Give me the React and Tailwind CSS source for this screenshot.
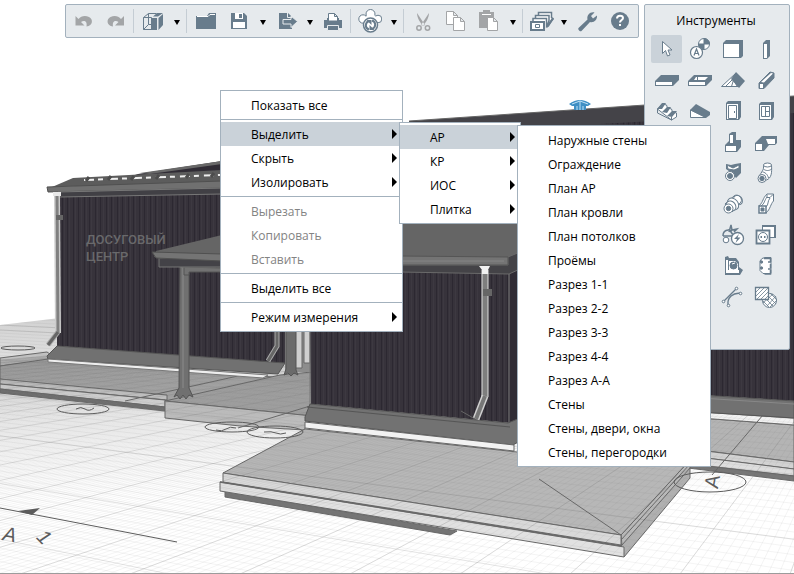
import React from "react";

const C = "#687c8c";
const W = "#ffffff";
const G = "#a3a5a7";

const Icon = ({ children }) => (
  <svg viewBox="0 0 24 24" className="w-6 h-6 shrink-0" fill="none" stroke={C} aria-hidden="true">
    {children}
  </svg>
);

const icons = {
  undo: <path d="M4.500 7v9.500h9L10 13c3-2 6.500-1 5.500 4.500c6.500-.5 7-7.500 2.500-9.500c-4-2-8-1-10.500 2z" fill={G} stroke="none" />,
  redo: <path d="M20 7v9.500h-9l3.500-3.500c-3-2-6.500-1-5.500 4.500c-6.500-.5-7-7.500-2.500-9.500c4-2 8-1 10.500 2z" fill={G} stroke="none" />,
  cube: (
    <>
      <path d="M2.500 8.500h8v12h-8zM2.500 8.500l5-4h8M7.500 4.500v11h3M2.500 20.500l5-5" fill="none" />
      <path d="M10 9h6v12h-6zM12 7.500l4-3.500h6l-5 3.500zM17.500 9l4.500-4v11l-4.500 5z" fill={C} stroke="none" />
    </>
  ),
  folder: (
    <>
      <path d="M2 7h11l2-3h7v16H2z" fill={C} stroke="none" />
      <path d="M3 7.500h11l2-2h5" stroke={W} />
    </>
  ),
  save: (
    <>
      <path d="M4 4h13l3 3v13H4z" fill={C} stroke="none" />
      <path d="M8 4h8v6H8zM6 13h12v6H6z" fill={W} stroke="none" />
      <path d="M12 5h3v4h-3z" fill={C} stroke="none" />
    </>
  ),
  exportFile: (
    <>
      <path d="M3 4h9l4 4v12H3z" fill={C} stroke="none" />
      <path d="M11.500 4v4.500H16M7 10.500h8V7l6.500 5.500-6.500 6v-3.500H7z" fill={C} stroke="#e6eaed" />
    </>
  ),
  print: (
    <>
      <path d="M3 11h3V9h12v2h3v8H3z" fill={C} stroke="none" />
      <path d="M7.500 12V4.500h6l3 3V12zM13.500 4.500v3h3" fill={W} />
      <path d="M6.500 16.500h11v5h-11z" fill={C} stroke="#e6eaed" />
    </>
  ),
  sync: (
    <>
      <circle cx="5" cy="10" r="4.200" fill={W} />
      <circle cx="20" cy="10" r="3.800" fill={W} />
      <circle cx="12.500" cy="5" r="4.500" fill={W} />
      <path d="M5 10l5-4h6l4 4-4 6H8z" fill={W} stroke="none" />
      <circle cx="12.500" cy="16" r="7" fill={W} strokeWidth="1.500" />
      <path d="M11 20.500c-4.500-1.500-4-7 0-8.500M14 11.500c4.500 1.500 4 7 0 8.500" strokeWidth="2" />
      <path d="M8.500 11h5v5zM16.500 21h-5v-5z" fill={C} stroke="none" />
    </>
  ),
  cut: (
    <>
      <path d="M6 4l8 12-2 1C9 13 6 9 6 4zM18 4l-8 12 2 1c3-4 6-8 6-13z" fill={G} stroke="none" />
      <circle cx="8" cy="19" r="2.200" stroke={G} strokeWidth="1.500" />
      <circle cx="16.500" cy="19" r="2.200" stroke={G} strokeWidth="1.500" />
    </>
  ),
  copy: (
    <g fill={W} stroke={G}>
      <path d="M2.500 2.500h7l4 4v9h-11zM9.500 2.500v4h4" />
      <path d="M9.500 8.500h7l4 4v9h-11zM16.500 8.500v4h4" />
    </g>
  ),
  paste: (
    <>
      <path d="M2 3h4V1h7v2h4v16H2z" fill={G} stroke="none" />
      <path d="M5 5.500h9" stroke={W} />
      <path d="M10.500 8.500h6l4 4v9h-10zM16.500 8.500v4h4" fill={W} stroke={G} />
    </>
  ),
  layers: (
    <>
      <path d="M8.500 7V3.500h13v5l1.500 1-5 8" fill={W} strokeWidth="1.500" />
      <path d="M5.500 9V6.500h13.500v5l-2 5" fill={W} strokeWidth="1.500" />
      <path d="M3 12V9.500h13.500v9" fill={W} strokeWidth="1.500" />
      <path d="M1 13h13v8H1z" fill={W} strokeWidth="2" />
      <path d="M5.500 15.500h4v3h-4z" />
      <path d="M16 17l6-8 2 1-7 9z" fill={C} stroke="none" />
    </>
  ),
  wrench: <path d="M3.500 19l9-8.500c-1-4 2.500-8 7-7l-3.500 3.500 2 2.500 4-3c.5 4-3 7.500-7 6.500L6.500 22c-1.500 1-4-1.500-3-3z" fill={C} stroke="none" />,
  help: (
    <>
      <circle cx="12" cy="12" r="9" fill={C} stroke="none" />
      <path d="M9 9.500c0-4 6-3.500 6-.5 0 2-3 2-3 4.500" stroke={W} strokeWidth="2" />
      <path d="M11 15h2v2h-2z" fill={W} stroke="none" />
    </>
  ),
  pointer: <path d="M7.500 4.500v12l3-3 2 5.500 2.500-1-2-5h4z" fill={W} />,
  axis: (
    <>
      <circle cx="16" cy="7" r="5.500" fill={W} />
      <path d="M16 1.500V7h5.500A5.500 5.500 0 0 0 16 1.500zM16 12.500V7h-5.500a5.500 5.500 0 0 0 5.500 5.500z" fill={C} />
      <circle cx="8.500" cy="15.500" r="6" fill={W} strokeWidth="1.200" />
      <path d="M6 18.500l2.500-6.500 2.500 6.500M7 16.500h3" strokeWidth="1.200" />
    </>
  ),
  wall: (
    <>
      <path d="M2 6l3-3h17v16l-2 2H2z" fill={C} stroke="none" />
      <path d="M3 7h15v13H3z" fill={W} stroke="none" />
    </>
  ),
  column: (
    <>
      <path d="M9 6l3-3h4v16l-3 3H9z" fill={C} stroke="none" />
      <path d="M10 7h3v14h-3z" fill={W} stroke="none" />
    </>
  ),
  floor: (
    <>
      <path d="M0 13l6-6h18v5l-6 6H0z" fill={C} stroke="none" />
      <path d="M1 14h16v3H1z" fill={W} stroke="none" />
    </>
  ),
  opening: (
    <>
      <path d="M0 13l6-6h18v5l-6 6H0z" fill={C} stroke="none" />
      <path d="M1 14h16v3H1zM8 9h12l-3 3H6z" fill={W} stroke="none" />
      <path d="M9.500 9v3" />
    </>
  ),
  roof: (
    <>
      <path d="M.5 18.500l14-13 4 13z" fill={W} />
      <path d="M5 18l7-7 4 7M14.500 5.500l-4 13" />
      <path d="M10 11l5-7 9 9-6 7z" fill={C} stroke="none" />
    </>
  ),
  beam: (
    <>
      <path d="M5 15L16 4l4 1v5L10 20.500H5z" fill={C} />
      <path d="M6 16h3v4H6zM7 14L17 5l2 .5-9 9z" fill={W} stroke="none" />
    </>
  ),
  stairs: (
    <>
      <path d="M2.500 10l5-5 4 1 1 3 4 1 1 3 4 1v4l-5 3z" fill={W} />
      <path d="M2 10l5-6h4l-4 6zM7 13l5-5h4l-4 6zM12 17l5-5h5l-5 6z" fill={C} stroke="none" />
      <path d="M2.500 10v4l14 7v-3" />
    </>
  ),
  ramp: (
    <>
      <path d="M2.500 11v7.500H18z" fill={W} />
      <path d="M2 11l6-6 14 8v3l-4 3z" fill={C} stroke="none" />
    </>
  ),
  door: (
    <>
      <path d="M5 4l2-2h13v16l-2 3H5z" fill={C} stroke="none" />
      <path d="M6 5h11v15H6z" fill={W} stroke="none" />
      <path d="M7.500 6.500h8v13h-8zM13.500 12v2" />
    </>
  ),
  windowTool: (
    <>
      <path d="M5 5l2-2h13v15l-2 3H5z" fill={C} stroke="none" />
      <path d="M6 6h11v14H6z" fill={W} stroke="none" />
      <path d="M7.500 7.500h8v10h-8zM11.500 7.500v10M11.500 12.500h4" />
    </>
  ),
  foundation: (
    <>
      <path d="M4 15l4-4V4l3-2h4v8h5v7l-4 5H4z" fill={C} stroke="none" />
      <path d="M5 16h10v5H5zM9 5h3v8H9z" fill={W} stroke="none" />
    </>
  ),
  beamCorner: (
    <>
      <path d="M1 13l7-7h15v7l-2 2h-6l-5 6H1z" fill={C} stroke="none" />
      <path d="M2 14h6v6H2zM12 9h9v5h-7z" fill={W} stroke="none" />
    </>
  ),
  valve: (
    <>
      <path d="M5 3l5 1 4-1 6-1v10l-5 5-3-4-7-5z" fill={C} stroke="none" />
      <path d="M6 4l6 3 6-3v3l-5 2-6-1z" fill={W} />
      <circle cx="9" cy="15" r="4.500" fill={W} />
      <circle cx="9" cy="15" r="2.500" fill={C} />
    </>
  ),
  pipe: (
    <>
      <path d="M4.500 17C8 9 10 10 9.500 4h8c.5 8 0 13-5 15z" fill={W} />
      <ellipse cx="13.500" cy="4" rx="4" ry="2" fill={W} />
      <path d="M9.500 8c2 2 6 2 8 0M8.500 11c2 0 5 2 6 6" />
      <circle cx="8" cy="17.500" r="4" fill={W} />
      <circle cx="8" cy="17.500" r="2.200" fill={C} />
    </>
  ),
  duct: (
    <>
      <path d="M4 12L13 4c4-3 9 2 7 6l-9 10z" fill={W} />
      <ellipse cx="17" cy="8" rx="4" ry="5" transform="rotate(-40 17 8)" />
      <ellipse cx="12" cy="12" rx="5" ry="6.500" transform="rotate(-40 12 12)" fill={W} />
      <ellipse cx="10" cy="14" rx="4.500" ry="5.500" transform="rotate(-40 10 14)" fill={W} />
      <circle cx="7.500" cy="16.500" r="4.500" fill={W} />
      <circle cx="7.500" cy="16.500" r="2.200" fill={C} />
    </>
  ),
  ductSquare: (
    <>
      <path d="M5 14c5-5 3-7 8-12h6.500v7c-3 3-3 8-7.500 12z" fill={W} />
      <path d="M13 2.500v3h3l3-3M13 5c-3 4-2 6-6 9M16 6c-3 4-1 6-4 9" />
      <path d="M5 14h7v7H5z" fill={W} strokeWidth="1.500" />
      <path d="M7 16h3v3H7z" fill={C} />
    </>
  ),
  electric: (
    <>
      <path d="M2 13c0-6 5-7 9-5M8 9l2-7 1 5 5-1-3 3M2 13h10M12 12L8 6" strokeWidth="1.500" />
      <circle cx="5" cy="17" r="2.800" fill={W} />
      <circle cx="16.500" cy="15.500" r="6" fill={W} strokeWidth="1.300" />
      <path d="M18 11l-5 5h3l-1.500 4 5-5.500h-3z" fill={C} stroke="none" />
    </>
  ),
  socket: (
    <>
      <path d="M8.500 12V2.500h12v12h-6" fill={W} />
      <path d="M8 2h14v13h-2V4H8z" fill={C} stroke="none" />
      <path d="M2.500 7.500h13v13h-13z" fill={W} strokeWidth="1.800" />
      <circle cx="9" cy="14" r="4.500" />
      <path d="M6.500 13h1.500v2H6.500zM10 13h1.500v2H10z" fill={C} stroke="none" />
    </>
  ),
  equipment: (
    <>
      <path d="M4 3l3-1 1 2h7l3 4v5l4 3-3 5H4z" fill={C} stroke="none" />
      <path d="M5 6h2v10h11v3H5zM8 7h6l3 3v6H8z" fill={W} stroke="none" />
      <circle cx="12.500" cy="11.500" r="3.500" fill={C} />
      <path d="M11 10l3-1" stroke={W} />
    </>
  ),
  terminal: (
    <>
      <path d="M8 4.500l3-1h6v16H9l-3-3V7z" fill={W} />
      <path d="M10 4.500h6M16.500 4v4M16.500 10v4M16.500 16v4h-6M17 8h-3M17 15h-3" strokeWidth="1.500" />
      <circle cx="7.500" cy="8" r="1.200" fill={C} />
      <circle cx="7.500" cy="14" r="1.200" fill={C} />
    </>
  ),
  curve: (
    <>
      <path d="M3 16L15 4M7 20C6 13 12 7 20 8.500" strokeWidth="1.300" />
      <g fill={W}>
        <circle cx="2.500" cy="16.500" r="1.300" />
        <circle cx="15.500" cy="3.500" r="1.300" />
        <circle cx="7.500" cy="20.500" r="1.300" />
        <circle cx="19.500" cy="8.500" r="1.300" />
      </g>
    </>
  ),
  hatch: (
    <>
      <circle cx="15.500" cy="15.500" r="7" fill={W} />
      <path d="M10 12l9 9M12 9l10 10M16 8l7 7M9 16l6 6M22 11l-9 10M19 9L9 18M23 15l-7 7M15 8l-6 7" strokeWidth=".8" />
      <path d="M1.500 2.500h13v12h-13z" fill={W} strokeWidth="1.300" />
      <path d="M2 7l4-4M2 11l8-8M3 14l11-11M7 14l7-7M11 14l3-3" strokeWidth=".8" />
    </>
  ),
};

const toolbar = [
  { icon: "undo", label: "Отменить", disabled: true },
  { icon: "redo", label: "Повторить", disabled: true },
  { sep: true },
  { icon: "cube", label: "Вид", menu: "wide" },
  { sep: true },
  { icon: "folder", label: "Открыть" },
  { icon: "save", label: "Сохранить", menu: "wide" },
  { icon: "exportFile", label: "Экспорт", menu: "narrow" },
  { icon: "print", label: "Печать" },
  { sep: true },
  { icon: "sync", label: "Синхронизация", menu: "wide" },
  { sep: true },
  { icon: "cut", label: "Вырезать", disabled: true },
  { icon: "copy", label: "Копировать", disabled: true },
  { icon: "paste", label: "Вставить", disabled: true, menu: "wide" },
  { sep: true },
  { icon: "layers", label: "Менеджер", menu: "narrow" },
  { icon: "wrench", label: "Настройки" },
  { icon: "help", label: "Справка" },
];

// null keeps a free cell in the palette
const tools = [
  ["pointer", "Выбор"], ["axis", "Ось"], ["wall", "Стена"], ["column", "Колонна"],
  ["floor", "Перекрытие"], ["opening", "Проём"], ["roof", "Крыша"], ["beam", "Балка"],
  ["stairs", "Лестница"], ["ramp", "Пандус"], ["door", "Дверь"], ["windowTool", "Окно"],
  null, null, ["foundation", "Фундамент"], ["beamCorner", "Ленточный фундамент"],
  null, null, ["valve", "Арматура"], ["pipe", "Труба"],
  null, null, ["duct", "Воздуховод"], ["ductSquare", "Фасонная деталь"],
  null, null, ["electric", "Электрика"], ["socket", "Розетка"],
  null, null, ["equipment", "Оборудование"], ["terminal", "Щит"],
  null, null, ["curve", "Линия"], ["hatch", "Штриховка"],
];

const contextMenu = [
  [{ label: "Показать все" }],
  [{ label: "Выделить", sub: true, active: true }, { label: "Скрыть", sub: true }, { label: "Изолировать", sub: true }],
  [{ label: "Вырезать", disabled: true }, { label: "Копировать", disabled: true }, { label: "Вставить", disabled: true }],
  [{ label: "Выделить все" }],
  [{ label: "Режим измерения", sub: true }],
];

const sectionMenu = [
  [{ label: "АР", sub: true, active: true }, { label: "КР", sub: true }, { label: "ИОС", sub: true }, { label: "Плитка", sub: true }],
];

const viewMenu = [
  [
    "Наружные стены", "Ограждение", "План АР", "План кровли", "План потолков", "Проёмы", "Разрез 1-1",
    "Разрез 2-2", "Разрез 3-3", "Разрез 4-4", "Разрез А-А", "Стены", "Стены, двери, окна", "Стены, перегородки",
  ].map((label) => ({ label })),
];

const Menu = ({ groups, label, className }) => (
  <div role="menu" aria-label={label} className={`absolute border border-[#a3b1bd] bg-white ${className}`}>
    {groups.map((group, i) => (
      <div key={i} className={`py-0.5 ${i > 0 ? "border-t border-[#a3b1bd]" : ""}`}>
        {group.map((item) => (
          <button
            key={item.label}
            role="menuitem"
            disabled={item.disabled}
            className={`flex h-6 w-full items-center justify-between pl-[30px] pr-[5px] text-left whitespace-nowrap ${
              item.active ? "bg-[#cad2d9]" : ""
            } ${item.disabled ? "text-[#838383]" : "text-black"}`}
          >
            <span className="pt-0.5">{item.label}</span>
            {item.sub && (
              <svg viewBox="0 0 5 10" className="h-2.5 w-[5px]" aria-hidden="true">
                <path d="M0 0l5 5-5 5z" fill="#000" />
              </svg>
            )}
          </button>
        ))}
      </div>
    ))}
  </div>
);

const Toolbar = () => (
  <div role="toolbar" className="flex h-[34px] flex-1 items-center rounded-xs border border-[#a3b1bd] bg-[#e6eaed]">
    {toolbar.map((item, i) =>
      item.sep ? (
        <span key={i} className="ml-px mr-0.5 h-6 w-px shrink-0 bg-[#c5cdd4]" />
      ) : (
        <React.Fragment key={i}>
          <button aria-label={item.label} disabled={item.disabled} className="flex w-[33px] shrink-0 justify-center">
            <Icon>{icons[item.icon]}</Icon>
          </button>
          {item.menu && (
            <button
              aria-label={`${item.label}: список`}
              className={`flex shrink-0 justify-center pt-0.5 ${item.menu === "wide" ? "w-4" : "w-3"}`}
            >
              <svg viewBox="0 0 6 5" className="h-[5px] w-1.5" aria-hidden="true">
                <path d="M0 0h6L3 5z" fill="#000" />
              </svg>
            </button>
          )}
        </React.Fragment>
      )
    )}
  </div>
);

const ToolPalette = () => (
  <section className="h-[346px] w-[146px] shrink-0 rounded-xs border border-[#a3b1bd] bg-[#e6eaed] pt-1.5 pr-[7px] pl-[5px]">
    <h2 className="text-center leading-5">Инструменты</h2>
    <div className="mt-0.5 grid grid-cols-4">
      {tools.map((tool, i) => (
        <div key={i} className="flex h-[31px] items-center justify-center">
          {tool && (
            <button
              aria-label={tool[1]}
              className={`flex h-7 w-[31px] shrink-0 items-center justify-center rounded-xs ${i === 0 ? "bg-[#cad2d9]" : ""}`}
            >
              <Icon>{icons[tool[0]]}</Icon>
            </button>
          )}
        </div>
      ))}
    </div>
  </section>
);

// Ground grid: both families of lines run to their own vanishing point
const gridLines = (step) => {
  let d = "";
  for (let y = 330; y < 580; y += step * (0.6 + (y - 330) / 300)) {
    d += `M0 ${y.toFixed(1)}L794 ${(y + (794 * (y - 260)) / 1350).toFixed(1)}`;
  }
  for (let y = 325; y > -120; y -= step * 0.7) {
    d += `M0 ${y.toFixed(1)}L794 ${(y + (794 * (y - 260)) / 1350).toFixed(1)}`;
  }
  for (let x = -2400; x < 1000; x += step * 2.2) {
    d += `M900 280L${x.toFixed(1)} 574`;
  }
  return d;
};

const Scene = () => (
  <svg
    viewBox="0 0 794 574"
    preserveAspectRatio="xMinYMin slice"
    className="absolute inset-0 h-full w-full"
    aria-label="3D вид здания"
  >
    <defs>
      <linearGradient id="ground" x1="0" y1="0" x2="0" y2="1">
        <stop offset="0" stopColor="#d2d2d2" />
        <stop offset=".4" stopColor="#f2f2f2" />
        <stop offset=".7" stopColor="#ffffff" />
      </linearGradient>
      <pattern id="siding" width="22" height="10" patternUnits="userSpaceOnUse">
        <path d="M0 0h22v10H0z" fill="#37333b" />
        <path d="M1.500 0v10M7.500 0v10M12.500 0v10M18.500 0v10" stroke="#2c2831" />
        <path d="M3.500 0v10M9.500 0v10M15.500 0v10M20.500 0v10" stroke="#3d3941" />
      </pattern>
      <clipPath id="land">
        <path d="M0 325L60 318H794V574H0z" />
      </clipPath>
    </defs>

    <path d="M0 325L60 318H794V574H0z" fill="url(#ground)" />

    {/* terraces */}
    <g stroke="#686868" strokeWidth="1">
      <path d="M0 358L47 352 57 359 0 366z" fill="#c2c2c2" />
      <path d="M0 366L48 359 285 378 167 401 0 379z" fill="#a9a9a9" />
      <path d="M0 379L167 395v5L0 384z" fill="#c9c9c9" />
      <path d="M0 384L165 400v7L0 389z" fill="#d9d9d9" />
      <path d="M0 389L165 407v4L0 393z" fill="#707070" />
      <path d="M165 401L280 375 312 372V416z" fill="#a3a3a3" />
      <path d="M165 401L312 416 304 430 240 426 165 418z" fill="#c2c2c2" />
      <path d="M238 428L310 406M125 401L247 374" fill="none" />
      <path d="M700 418L794 425V462L700 450z" fill="#b4b4b4" />
      <path d="M690 449L794 462V469L690 456z" fill="#d2d2d2" />
      <path d="M690 456L794 469V476L690 464z" fill="#dedede" />
      <path d="M688 464L794 476V481L688 468z" fill="#777" />
      <path d="M700 412L794 418V425L700 418z" fill="#f2f2f2" />
      <path d="M225 491L457 531 450 535 225 497z" fill="#757575" />
      <path d="M621 545L624 557 690 478 690 460 660 475z" fill="#b0b0b0" />
      <path d="M621 535L690 460V468L622 545z" fill="#b9b9b9" />
      <path d="M621 540L690 464" />
      <path d="M223 473L305 429 517 452 690 460 621 535z" fill="#b7b7b7" />
      <path d="M223 473L621 535V545L223 482z" fill="#d9d9d9" />
      <path d="M220 482L624 547V557L220 491z" fill="#e1e1e1" />
      <path d="M220 482L622 546" strokeWidth="1.500" />
      <path d="M539 479L621 535M763 415L712 475" fill="none" />
    </g>

    <g clipPath="url(#land)" fill="none">
      <path d={gridLines(5)} stroke="#777" strokeWidth="1" opacity=".08" />
      <path d={gridLines(50)} stroke="#777" strokeWidth="1" opacity=".2" />
    </g>

    {/* left wing */}
    <path d="M57 195L300 190V365L57 346z" fill="url(#siding)" />
    <path d="M138 174L222 161V180H120z" fill="#302c35" />
    <path d="M140 173L222 161V164L150 174z" fill="#686868" />
    <path d="M73 178L222 170V183L52 187z" fill="#5c5c5c" />
    <path d="M84 180L220 175" stroke="#eeeeee" strokeWidth="2" strokeDasharray="10 4 5 5" />
    <path d="M86 181l3-4M108 180l3-4M131 180l3-4M156 179l3-4M186 178l3-4M211 177l3-4" stroke="#4c4c4c" strokeWidth="3" />
    <path d="M47 187L222 181V188L48 192z" fill="#707070" stroke="#505050" />
    <path d="M58 192L222 188V194L60 197z" fill="#414045" stroke="#777" />
    <path d="M57 346L285 363 278 374 48 359 47 356z" fill="#717171" stroke="#555" />
    <path d="M48 359L268 375 263 378 48 362z" fill="#eeeeee" stroke="#777" />
    <path d="M57 193L58 333" stroke="#cccccc" strokeWidth="6" />
    <path d="M57 193L58 333" stroke="#808080" strokeWidth="3" />
    <path d="M53 192h8v4h-8z" fill="#e8e8e8" />
    <path d="M56 215h7v5h-7z" fill="#666" />
    <path d="M58 332L48 345M277 332V346L268 361" stroke="#aaa" strokeWidth="5" fill="none" />
    <path d="M58 332L48 345M277 332V346L268 361" stroke="#666" strokeWidth="3" fill="none" />
    <g fill="#69696b" className="font-['Roboto',sans-serif] text-[13px] font-medium">
      <text x="86" y="244">ДОСУГОВЫЙ</text>
      <text x="86" y="261">ЦЕНТР</text>
    </g>

    {/* entrance */}
    <path d="M285 325H312V372H285z" fill="#8d8d8d" />
    <path d="M295 325h7v43h-7zM304 325h6v38h-6z" fill="#cfcfcf" stroke="#666" />
    <path d="M286 325h10v45l2 5-4-2-3 3-3-3-4 2 2-6z" fill="#6b6b6b" stroke="#555" />

    {/* canopy */}
    <path d="M180 266h9v122l4 9-4-2-3 4-3-4-3 4-3-4-3 2 5-9z" fill="#707070" stroke="#555" />
    <path d="M183 268v120" stroke="#8b8b8b" />
    <path d="M184 267L222 268V272H189v3h-5z" fill="#727272" stroke="#555" />
    <path d="M159 258H222V267H159z" fill="#434247" stroke="#777" />
    <path d="M156 251L222 235 403 200H520V253L510 257H154z" fill="#656565" />
    <path d="M152 252L222 254V261L156 258z" fill="#747474" stroke="#505050" />

    {/* front block */}
    <path d="M309 272H510V423L311 404z" fill="url(#siding)" />
    <path d="M510 272L520 268V422L509 423z" fill="#302c35" />
    <path d="M400 265H508V257L520 252V269L509 274 400 272z" fill="#444347" stroke="#6a6a6a" />
    <path d="M400 256L508 257V265H400z" fill="#747474" stroke="#555" />
    <path d="M400 261H504" stroke="#858585" />
    <path d="M509 274V423M310 332V404" stroke="#777" />
    <path d="M310 404L508 423 520 418V441L513 445 305 421V417z" fill="#727272" stroke="#555" />
    <path d="M307 407L510 427" stroke="#555" />
    <path d="M305 422L514 445V451L305 428z" fill="#f2f2f2" stroke="#666" />
    <path d="M485 270V397" stroke="#dddddd" strokeWidth="7" />
    <path d="M485 270V397" stroke="#7e7e7e" strokeWidth="5" />
    <path d="M479 266h11l-2 4v4h-6v-4z" fill="#f1f1f1" />
    <path d="M483 289h9v7h-9z" fill="#666" />
    <path d="M485 396L476 419" stroke="#d1d1d1" strokeWidth="7" />
    <path d="M485 396L476 419" stroke="#777" strokeWidth="4" />
    <path d="M461 411L475 419" stroke="#666" />

    {/* back block */}
    <path d="M409 121L645 105 794 96V114L640 126H520L409 128z" fill="#444348" />
    <path d="M409 121L645 105 794 96" stroke="#666" fill="none" />
    <path d="M600 124L794 113V401L700 395V126z" fill="url(#siding)" />
    <path d="M700 395L794 401V418L700 412z" fill="#717171" stroke="#555" />
    <path d="M700 398L794 404" stroke="#888" />
    <path d="M569 104Q580 96 591 104L588 106H572zM574 106h12v4h-12z" fill="#3f8fc4" />
    <path d="M572 104l8-3 8 3M577 106v4M580 101v9M583 106v4" stroke="#bfe1f5" fill="none" />

    {/* axis marks */}
    <g fill="none" stroke="#5c5c5c">
      <ellipse cx="18" cy="348" rx="17" ry="2" />
      <ellipse cx="83" cy="409" rx="26" ry="5" />
      <ellipse cx="232" cy="427" rx="27" ry="5" />
      <ellipse cx="275" cy="432" rx="28" ry="6" />
      <ellipse cx="710" cy="482" rx="36" ry="10" />
      <path d="M76 409q5-3 9 0t9-1M216 430q6 2 10-1t10-1M264 432q8-1 12 1t10 0" />
      <path d="M0 508L177 542" />
    </g>
    <path d="M18 511L40 508 32 515z" fill="#5c5c5c" />
    <g fill="#5c5c5c" className="font-['Liberation_Sans',sans-serif]">
      <text x="705" y="490" transform="rotate(-80 711 482)" className="text-[20px]">А</text>
      <text x="2" y="540" transform="rotate(10 2 540)" className="text-[20px] italic">А</text>
      <text x="38" y="544" transform="rotate(45 44 538)" className="text-[20px] italic">1</text>
    </g>
  </svg>
);

export default function App() {
  return (
    <main className="relative h-screen overflow-hidden border-b border-[#9c9c9c] bg-white font-['Open_Sans','Noto_Sans',sans-serif] text-[12px] text-black">
      <Scene />
      <div className="relative flex items-start gap-[5px] pt-1 pr-1 pl-[65px]">
        <Toolbar />
        <ToolPalette />
      </div>
      <Menu groups={contextMenu} label="Контекстное меню" className="top-[90px] left-[220px] w-[183px]" />
      <Menu groups={sectionMenu} label="Выделить" className="top-[122px] left-[399px] w-[122px]" />
      <Menu groups={viewMenu} label="АР" className="top-[125px] left-[517px] w-[194px]" />
    </main>
  );
}
